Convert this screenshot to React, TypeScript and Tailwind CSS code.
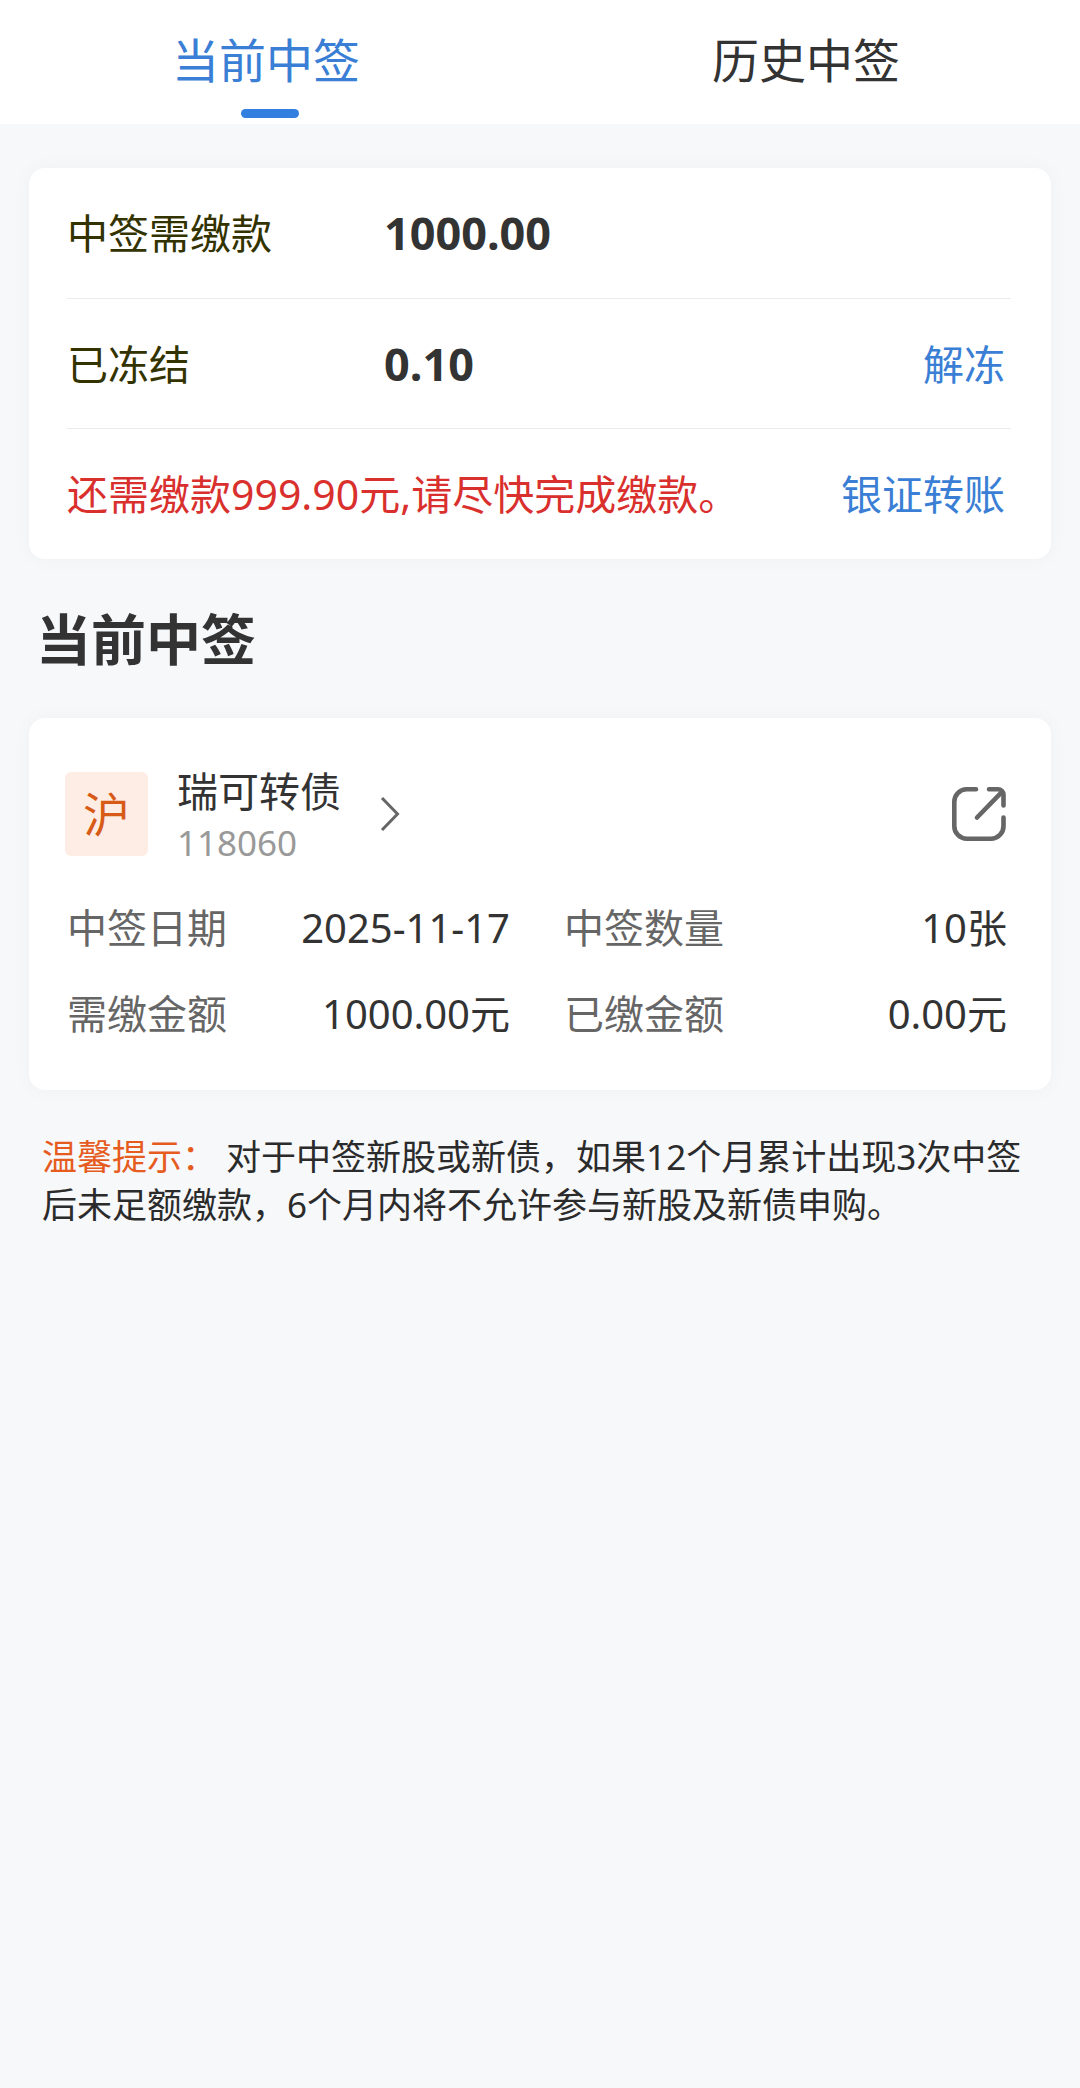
import React from 'react'
import clsx from 'clsx'

type TabKey = 'current' | 'history'

const tabs: { key: TabKey; label: string }[] = [
  { key: 'current', label: '当前中签' },
  { key: 'history', label: '历史中签' },
]

const bond = {
  market: '沪',
  name: '瑞可转债',
  code: '118060',
  fields: [
    { label: '中签日期', value: '2025-11-17' },
    { label: '中签数量', value: '10张' },
    { label: '需缴金额', value: '1000.00元' },
    { label: '已缴金额', value: '0.00元' },
  ],
}

function ChevronIcon() {
  return (
    <svg width="20" height="36" viewBox="0 0 20 36" fill="none" stroke="#666" strokeWidth="3" aria-hidden="true">
      <path d="M2 2 L17.5 18 L2 34" />
    </svg>
  )
}

function ShareIcon() {
  return (
    <svg width="56" height="56" viewBox="0 0 56 56" fill="none" stroke="#666" strokeWidth="4.6" strokeLinecap="round" aria-hidden="true">
      <path d="M25 3.3 H15.5 A12.5 12.5 0 0 0 3.3 15.8 V40 A12.5 12.5 0 0 0 15.8 52.7 H40 A12.5 12.5 0 0 0 52.5 40 V31.5" />
      <path d="M38 3.3 H47 A5.5 5.5 0 0 1 52.5 8.8 V19.5" />
      <path d="M26 31.5 L50.5 6.3" />
    </svg>
  )
}

function Card({ className, children }: { className?: string; children: React.ReactNode }) {
  return (
    <section className={clsx('mx-[29px] rounded-2xl bg-white pl-[38px] shadow-[0_0_20px_rgba(0,0,0,0.035)]', className)}>
      {children}
    </section>
  )
}

export default function App() {
  const [tab, setTab] = React.useState<TabKey>('current')

  return (
    <div className="min-h-screen bg-[#f7f8fa] font-['Noto_Sans','Noto_Sans_CJK_SC',sans-serif] text-[41px] leading-[56px] text-[#333]">
      {/* 顶部标签 */}
      <nav className="grid grid-cols-2 bg-white">
        {tabs.map(t => (
          <button
            key={t.key}
            type="button"
            onClick={() => setTab(t.key)}
            className={clsx(
              'flex h-[124px] flex-col items-center justify-end gap-[17px] pb-[6px] text-[47px] leading-[64px]',
              tab === t.key && 'text-[#3a7fd5]'
            )}
          >
            <span className="pr-2">{t.label}</span>
            <span className={clsx('h-[9px] w-[58px] rounded-full', tab === t.key && 'bg-[#337fdf]')} />
          </button>
        ))}
      </nav>

      {/* 缴款汇总 */}
      <Card className="mt-[44px] divide-y divide-[#ebebeb] pr-[40px]">
        <div className="flex h-[131px] items-center">
          <span className="w-[317px] text-[#333300]">中签需缴款</span>
          <span className="text-[45px] font-bold">1000.00</span>
        </div>
        <div className="flex h-[130px] items-center pr-1.5">
          <span className="w-[317px] text-[#333300]">已冻结</span>
          <span className="flex-1 text-[45px] font-bold">0.10</span>
          <a href="#unfreeze" className="text-[#3a7fd5]">解冻</a>
        </div>
        <div className="flex h-[130px] items-center justify-between pr-1.5">
          <span className="text-[#d9302e]">还需缴款999.90元,请尽快完成缴款。</span>
          <a href="#transfer" className="text-[#3a7fd5]">银证转账</a>
        </div>
      </Card>

      <h2 className="mt-[40px] px-[36px] text-[55px] leading-[80px] font-bold">当前中签</h2>

      {/* 中签明细 */}
      <Card className="mt-[39px] pt-[44px] pr-[44px] pb-[48px]">
        <div className="flex items-center">
          <a href="#bond" className="flex items-center">
            <span className="-ml-[2px] flex h-[84px] w-[83px] items-center justify-center rounded-md bg-[#fdede4] text-[47px] leading-[64px] text-[#d75a17]">
              {bond.market}
            </span>
            <span className="ml-[29px] flex flex-col">
              <span className="leading-[58px]">{bond.name}</span>
              <span className="text-[35px] leading-[46px] text-[#999]">{bond.code}</span>
            </span>
            <span className="ml-[39px]"><ChevronIcon /></span>
          </a>
          <button type="button" aria-label="分享" className="ml-auto"><ShareIcon /></button>
        </div>
        <dl className="mt-[34px] grid grid-cols-2 gap-x-[54px] gap-y-[30px] text-[40px]">
          {bond.fields.map(f => (
            <div key={f.label} className="flex justify-between">
              <dt className="text-[#666]">{f.label}</dt>
              <dd>{f.value}</dd>
            </div>
          ))}
        </dl>
      </Card>

      <p className="mt-[43px] px-[42px] text-[35px] leading-[48px] text-[#2b2b2b]">
        <span className="text-[#e65c1e]">温馨提示：</span> 对于中签新股或新债，如果12个月累计出现3次中签后未足额缴款，6个月内将不允许参与新股及新债申购。
      </p>
    </div>
  )
}
